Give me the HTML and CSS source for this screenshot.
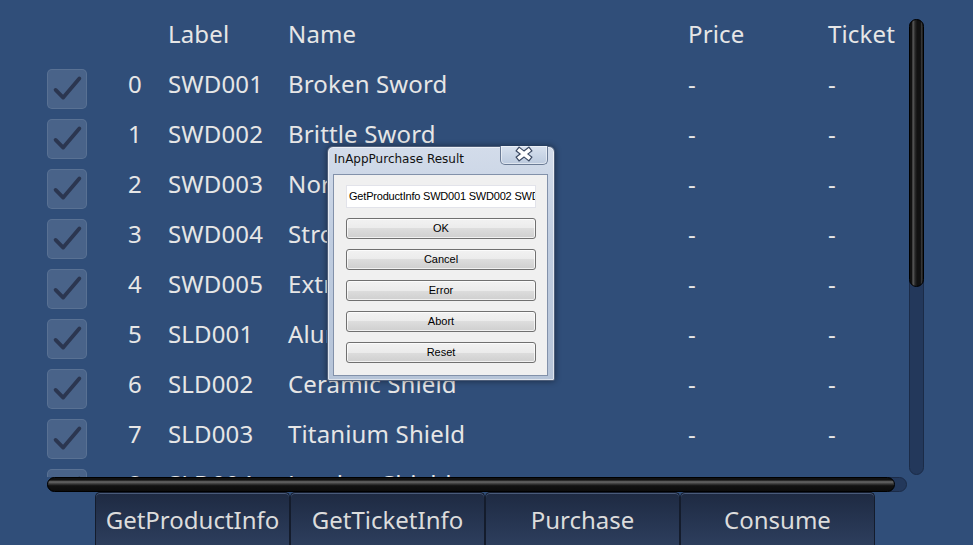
FILE: index.html
```html
<!DOCTYPE html>
<html>
<head>
<meta charset="utf-8">
<link rel="stylesheet" href="styles.css">
</head>
<body>
<div class="app">
  <div class="top">
    <div class="scrollview">
      <div class="viewport">
        <div class="row header">
          <div class="c-check"></div>
          <div class="c-idx"></div>
          <div class="c-label">Label</div>
          <div class="c-name">Name</div>
          <div class="c-price">Price</div>
          <div class="c-ticket">Ticket</div>
        </div>
        <div class="row"><div class="c-check"><span class="box"><svg viewBox="0 0 40 40"><polyline points="8,21 16,29 33,9"/></svg></span></div><div class="c-idx">0</div><div class="c-label">SWD001</div><div class="c-name">Broken Sword</div><div class="c-price">-</div><div class="c-ticket">-</div></div>
        <div class="row"><div class="c-check"><span class="box"><svg viewBox="0 0 40 40"><polyline points="8,21 16,29 33,9"/></svg></span></div><div class="c-idx">1</div><div class="c-label">SWD002</div><div class="c-name">Brittle Sword</div><div class="c-price">-</div><div class="c-ticket">-</div></div>
        <div class="row"><div class="c-check"><span class="box"><svg viewBox="0 0 40 40"><polyline points="8,21 16,29 33,9"/></svg></span></div><div class="c-idx">2</div><div class="c-label">SWD003</div><div class="c-name">Normal Sword</div><div class="c-price">-</div><div class="c-ticket">-</div></div>
        <div class="row"><div class="c-check"><span class="box"><svg viewBox="0 0 40 40"><polyline points="8,21 16,29 33,9"/></svg></span></div><div class="c-idx">3</div><div class="c-label">SWD004</div><div class="c-name">Strong Sword</div><div class="c-price">-</div><div class="c-ticket">-</div></div>
        <div class="row"><div class="c-check"><span class="box"><svg viewBox="0 0 40 40"><polyline points="8,21 16,29 33,9"/></svg></span></div><div class="c-idx">4</div><div class="c-label">SWD005</div><div class="c-name">Extreme Sword</div><div class="c-price">-</div><div class="c-ticket">-</div></div>
        <div class="row"><div class="c-check"><span class="box"><svg viewBox="0 0 40 40"><polyline points="8,21 16,29 33,9"/></svg></span></div><div class="c-idx">5</div><div class="c-label">SLD001</div><div class="c-name">Aluminum Shield</div><div class="c-price">-</div><div class="c-ticket">-</div></div>
        <div class="row"><div class="c-check"><span class="box"><svg viewBox="0 0 40 40"><polyline points="8,21 16,29 33,9"/></svg></span></div><div class="c-idx">6</div><div class="c-label">SLD002</div><div class="c-name">Ceramic Shield</div><div class="c-price">-</div><div class="c-ticket">-</div></div>
        <div class="row"><div class="c-check"><span class="box"><svg viewBox="0 0 40 40"><polyline points="8,21 16,29 33,9"/></svg></span></div><div class="c-idx">7</div><div class="c-label">SLD003</div><div class="c-name">Titanium Shield</div><div class="c-price">-</div><div class="c-ticket">-</div></div>
        <div class="row"><div class="c-check"><span class="box"><svg viewBox="0 0 40 40"><polyline points="8,21 16,29 33,9"/></svg></span></div><div class="c-idx">8</div><div class="c-label">SLD004</div><div class="c-name">Leather Shield</div><div class="c-price">-</div><div class="c-ticket">-</div></div>
      </div>
      <div class="hbar"><div class="hthumb"></div></div>
    </div>
    <div class="vbar"><div class="vthumb"></div></div>
  </div>
  <div class="buttons">
    <div class="btn">GetProductInfo</div>
    <div class="btn">GetTicketInfo</div>
    <div class="btn">Purchase</div>
    <div class="btn">Consume</div>
  </div>
</div>

<div class="dialog">
  <div class="titlebar">
    <span class="title">InAppPurchase Result</span>
    <span class="close"><svg viewBox="0 0 48 19" width="48" height="19"><path class="xo" d="M19.5 5.5 L28.5 12.5 M28.5 5.5 L19.5 12.5"/><path class="xi" d="M19.5 5.5 L28.5 12.5 M28.5 5.5 L19.5 12.5"/></svg></span>
  </div>
  <div class="content">
    <div class="field">GetProductInfo SWD001 SWD002 SWD003 SWD004</div>
    <div class="dbtn">OK</div>
    <div class="dbtn">Cancel</div>
    <div class="dbtn">Error</div>
    <div class="dbtn">Abort</div>
    <div class="dbtn">Reset</div>
  </div>
</div>
</body>
</html>
```

FILE: styles.css
```css
html, body {
  margin: 0;
  padding: 0;
}
body {
  width: 973px;
  height: 545px;
  overflow: hidden;
  background: #304e79;
  font-family: "Noto Sans", "Open Sans", sans-serif;
  color: #e6e6e6;
  position: relative;
}
.app {
  display: flex;
  flex-direction: column;
  height: 545px;
}
.top {
  display: flex;
  height: 492px;
}
.scrollview {
  margin-left: 47px;
  width: 860px;
  display: flex;
  flex-direction: column;
}
.viewport {
  height: 477px;
  overflow: hidden;
  padding-top: 9px;
  box-sizing: border-box;
}
.row {
  display: flex;
  height: 50px;
  line-height: 50px;
  font-size: 24px;
  white-space: nowrap;
  letter-spacing: 0.15px;
}
.c-check {
  width: 40px;
  display: flex;
  align-items: flex-end;
}
.box {
  width: 40px;
  height: 40px;
  box-sizing: border-box;
  border-radius: 5px;
  background: rgba(255, 255, 255, 0.12);
  border: 1px solid rgba(255, 255, 255, 0.09);
  display: block;
}
.box svg {
  display: block;
  width: 38px;
  height: 38px;
}
.box polyline {
  fill: none;
  stroke: #2b3650;
  stroke-width: 4;
  stroke-linecap: round;
  stroke-linejoin: round;
}
.c-idx {
  width: 55px;
  text-align: right;
}
.c-label {
  margin-left: 26px;
  width: 120px;
}
.c-name {
  width: 400px;
}
.c-price {
  width: 140px;
}
.c-ticket {
  flex: 1;
}
.hbar {
  height: 15px;
  box-sizing: border-box;
  background: #23385b;
  border: 1px solid #1b2b47;
  border-radius: 8px;
  display: flex;
}
.hthumb {
  width: 846px;
  margin: -1px 0 -1px -1px;
  border-radius: 8px;
  border: 1px solid #000;
  background: linear-gradient(to bottom, #111 0%, #111 15%, #6a6a6a 30%, #3a3a3a 45%, #121212 60%, #0c0c0c 100%);
}
.vbar {
  margin-left: 2px;
  margin-top: 19px;
  width: 15px;
  height: 456px;
  box-sizing: border-box;
  background: #23385b;
  border: 1px solid #1b2b47;
  border-radius: 8px;
  display: flex;
  flex-direction: column;
}
.vthumb {
  height: 266px;
  margin: -1px -1px 0 -1px;
  border-radius: 8px;
  border: 1px solid #000;
  background: linear-gradient(to right, #111 0%, #111 12%, #5a5a5a 24%, #2a2a2a 38%, #111 55%, #111 80%, #3c3c3c 90%, #111 100%);
}
.buttons {
  display: flex;
  margin-left: 95px;
  height: 53px;
}
.btn {
  width: 195px;
  box-sizing: border-box;
  border: 1px solid #141c2c;
  border-bottom: none;
  border-radius: 5px 5px 0 0;
  background: linear-gradient(to bottom, #1e2a42, #2d3e5d);
  box-shadow: inset 0 1px 0 #4a5b7a;
  color: #dcdcdc;
  font-size: 24px;
  line-height: 53px;
  text-align: center;
}

/* dialog */
.dialog {
  position: absolute;
  left: 327px;
  top: 146px;
  width: 228px;
  height: 235px;
  box-sizing: border-box;
  border: 1px solid #4d5d78;
  border-radius: 6px 6px 2px 2px;
  background: linear-gradient(to bottom, #d3dcea 0%, #c0cde0 40%, #b6c4d8 100%);
  box-shadow: 0 0 6px rgba(0, 0, 0, 0.45), inset 0 0 0 1px rgba(255, 255, 255, 0.55);
  padding: 0 6px 4px 5px;
  display: flex;
  flex-direction: column;
  font-family: "Liberation Sans", Arial, sans-serif;
  color: #000;
}
.titlebar {
  height: 27px;
  display: flex;
  align-items: flex-start;
  position: relative;
}
.title {
  font-family: "DejaVu Sans", sans-serif;
  font-size: 12px;
  margin-left: 1px;
  margin-top: 5px;
  color: #111;
}
.close {
  position: absolute;
  right: 0px;
  top: -1px;
  width: 48px;
  height: 19px;
  box-sizing: border-box;
  border: 1px solid #6b7b95;
  border-top: none;
  border-radius: 0 0 5px 5px;
  background: linear-gradient(to bottom, #d8e1ee, #bccade);
  box-shadow: inset 0 0 0 1px rgba(255, 255, 255, 0.5);
}
.close svg {
  display: block;
  margin: -1px 0 0 -1px;
}
.close .xo {
  stroke: #3c4a63;
  stroke-width: 6;
  stroke-linecap: square;
  fill: none;
}
.close .xi {
  stroke: #fff;
  stroke-width: 3.6;
  stroke-linecap: square;
  fill: none;
}
.content {
  flex: 1;
  background: #f0f0f0;
  border: 1px solid #8291aa;
  padding: 10px 11px 0 12px;
  display: flex;
  flex-direction: column;
  gap: 10px;
}
.field {
  height: 23px;
  box-sizing: border-box;
  background: #fff;
  border: 1px solid #e2e3ea;
  font-size: 11px;
  letter-spacing: -0.2px;
  line-height: 21px;
  padding-left: 2px;
  white-space: nowrap;
  overflow: hidden;
}
.dbtn {
  height: 21px;
  box-sizing: border-box;
  border: 1px solid #707070;
  border-radius: 3px;
  background: linear-gradient(to bottom, #f2f2f2 0%, #ebebeb 50%, #dddddd 50%, #cfcfcf 100%);
  box-shadow: inset 0 0 0 1px rgba(255, 255, 255, 0.7);
  font-size: 11px;
  line-height: 19px;
  text-align: center;
}
```
